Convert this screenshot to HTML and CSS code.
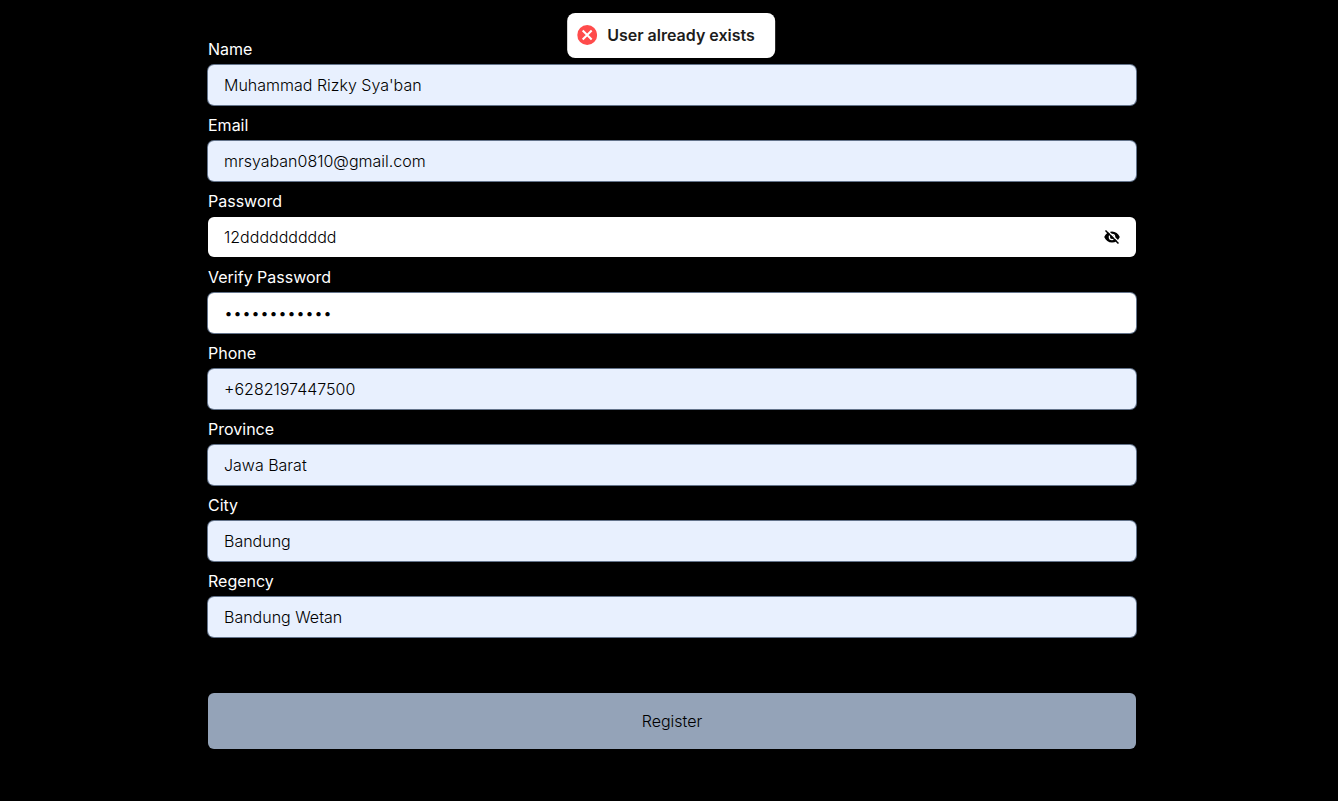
FILE: index.html
```html
<!DOCTYPE html>
<html lang="en">
<head>
<meta charset="utf-8">
<meta name="viewport" content="width=device-width, initial-scale=1">
<title>Register</title>
<link rel="stylesheet" href="styles.css">
</head>
<body>
<div class="toast" role="status">
  <svg class="toast-icon" viewBox="0 0 20 20" aria-hidden="true"><circle cx="10" cy="10" r="10" fill="#ff4b4b"/><path d="M5.5 5.5l9 9M14.5 5.5l-9 9" stroke="#fff" stroke-width="2"/></svg>
  <span class="toast-text">User already exists</span>
</div>
<main class="page">
  <form class="form">
    <div class="field">
      <label class="label" for="name">Name</label>
      <input class="input filled" id="name" type="text" value="Muhammad Rizky Sya'ban">
    </div>
    <div class="field">
      <label class="label" for="email">Email</label>
      <input class="input filled" id="email" type="email" value="mrsyaban0810@gmail.com">
    </div>
    <div class="field">
      <label class="label" for="password">Password</label>
      <div class="password-box">
        <input class="password-input" id="password" type="text" value="12dddddddddd">
        <button class="toggle" type="button" aria-label="Hide password">
          <svg class="toggle-icon" viewBox="0 0 16 16" aria-hidden="true"><path fill-rule="evenodd" d="M.2 8C1.600 4.500 4.500 2.400 8 2.400S14.400 4.500 15.800 8C14.400 11.500 11.500 13.600 8 13.600S1.600 11.500.2 8zM8 4.700a3.300 3.300 0 1 0 0 6.600 3.300 3.300 0 0 0 0-6.600z"/><circle cx="8" cy="8" r="2"/><path d="M2.700.700l13 13" stroke="#fff" stroke-width="1.300"/><path d="M1.500 1.500l13 13" stroke="#000" stroke-width="1.500"/></svg>
        </button>
      </div>
    </div>
    <div class="field">
      <label class="label" for="verify">Verify Password</label>
      <input class="input" id="verify" type="password" value="12dddddddddd">
    </div>
    <div class="field">
      <label class="label" for="phone">Phone</label>
      <input class="input filled" id="phone" type="tel" value="+6282197447500">
    </div>
    <div class="field">
      <label class="label" for="province">Province</label>
      <input class="input filled" id="province" type="text" value="Jawa Barat">
    </div>
    <div class="field">
      <label class="label" for="city">City</label>
      <input class="input filled" id="city" type="text" value="Bandung">
    </div>
    <div class="field">
      <label class="label" for="regency">Regency</label>
      <input class="input filled" id="regency" type="text" value="Bandung Wetan">
    </div>
    <button class="submit" type="submit">Register</button>
  </form>
</main>
</body>
</html>
```

FILE: styles.css
```css
*, *::before, *::after { box-sizing: border-box; }
body {
  margin: 0;
  background: #000;
  color: #fff;
  font: 300 16px/24px Inter, sans-serif;
}
input, button {
  margin: 0;
  border: 0;
  font: inherit;
  color: #000;
}
.page {
  display: flex;
  justify-content: center;
  padding: 37px 16px 52px 22px;
}
.form {
  display: flex;
  flex-direction: column;
  gap: 8px;
  width: 100%;
  max-width: 928px;
}
.field {
  display: flex;
  flex-direction: column;
  gap: 4px;
}
.label { font-weight: 400; }
.input {
  width: 100%;
  height: 40px;
  padding: 0 16px;
  border-radius: 6px;
  background: #fff;
  box-shadow: 0 0 0 1px #64748b;
  outline: none;
}
.filled { background: #e8f0fe; }
.password-box {
  display: flex;
  align-items: center;
  height: 40px;
  padding: 0 16px;
  border-radius: 6px;
  background: #fff;
}
.password-input {
  flex: 1;
  min-width: 0;
  padding: 0;
  background: none;
  outline: none;
}
.toggle {
  display: flex;
  padding: 0;
  background: none;
  cursor: pointer;
}
.toggle-icon {
  width: 16px;
  height: 16px;
}
.submit {
  height: 56px;
  margin-top: 48px;
  border-radius: 6px;
  background: #94a3b8;
  cursor: pointer;
}
.toast {
  position: fixed;
  top: 13px;
  left: calc(50% + 2px);
  transform: translateX(-50%);
  display: flex;
  align-items: center;
  padding: 6px 10px 7px;
  border-radius: 8px;
  background: #fff;
  color: #1c1c1c;
  font-weight: 600;
  white-space: nowrap;
}
.toast-icon {
  width: 20px;
  height: 20px;
}
.toast-text { margin: 4px 10px; }
```
